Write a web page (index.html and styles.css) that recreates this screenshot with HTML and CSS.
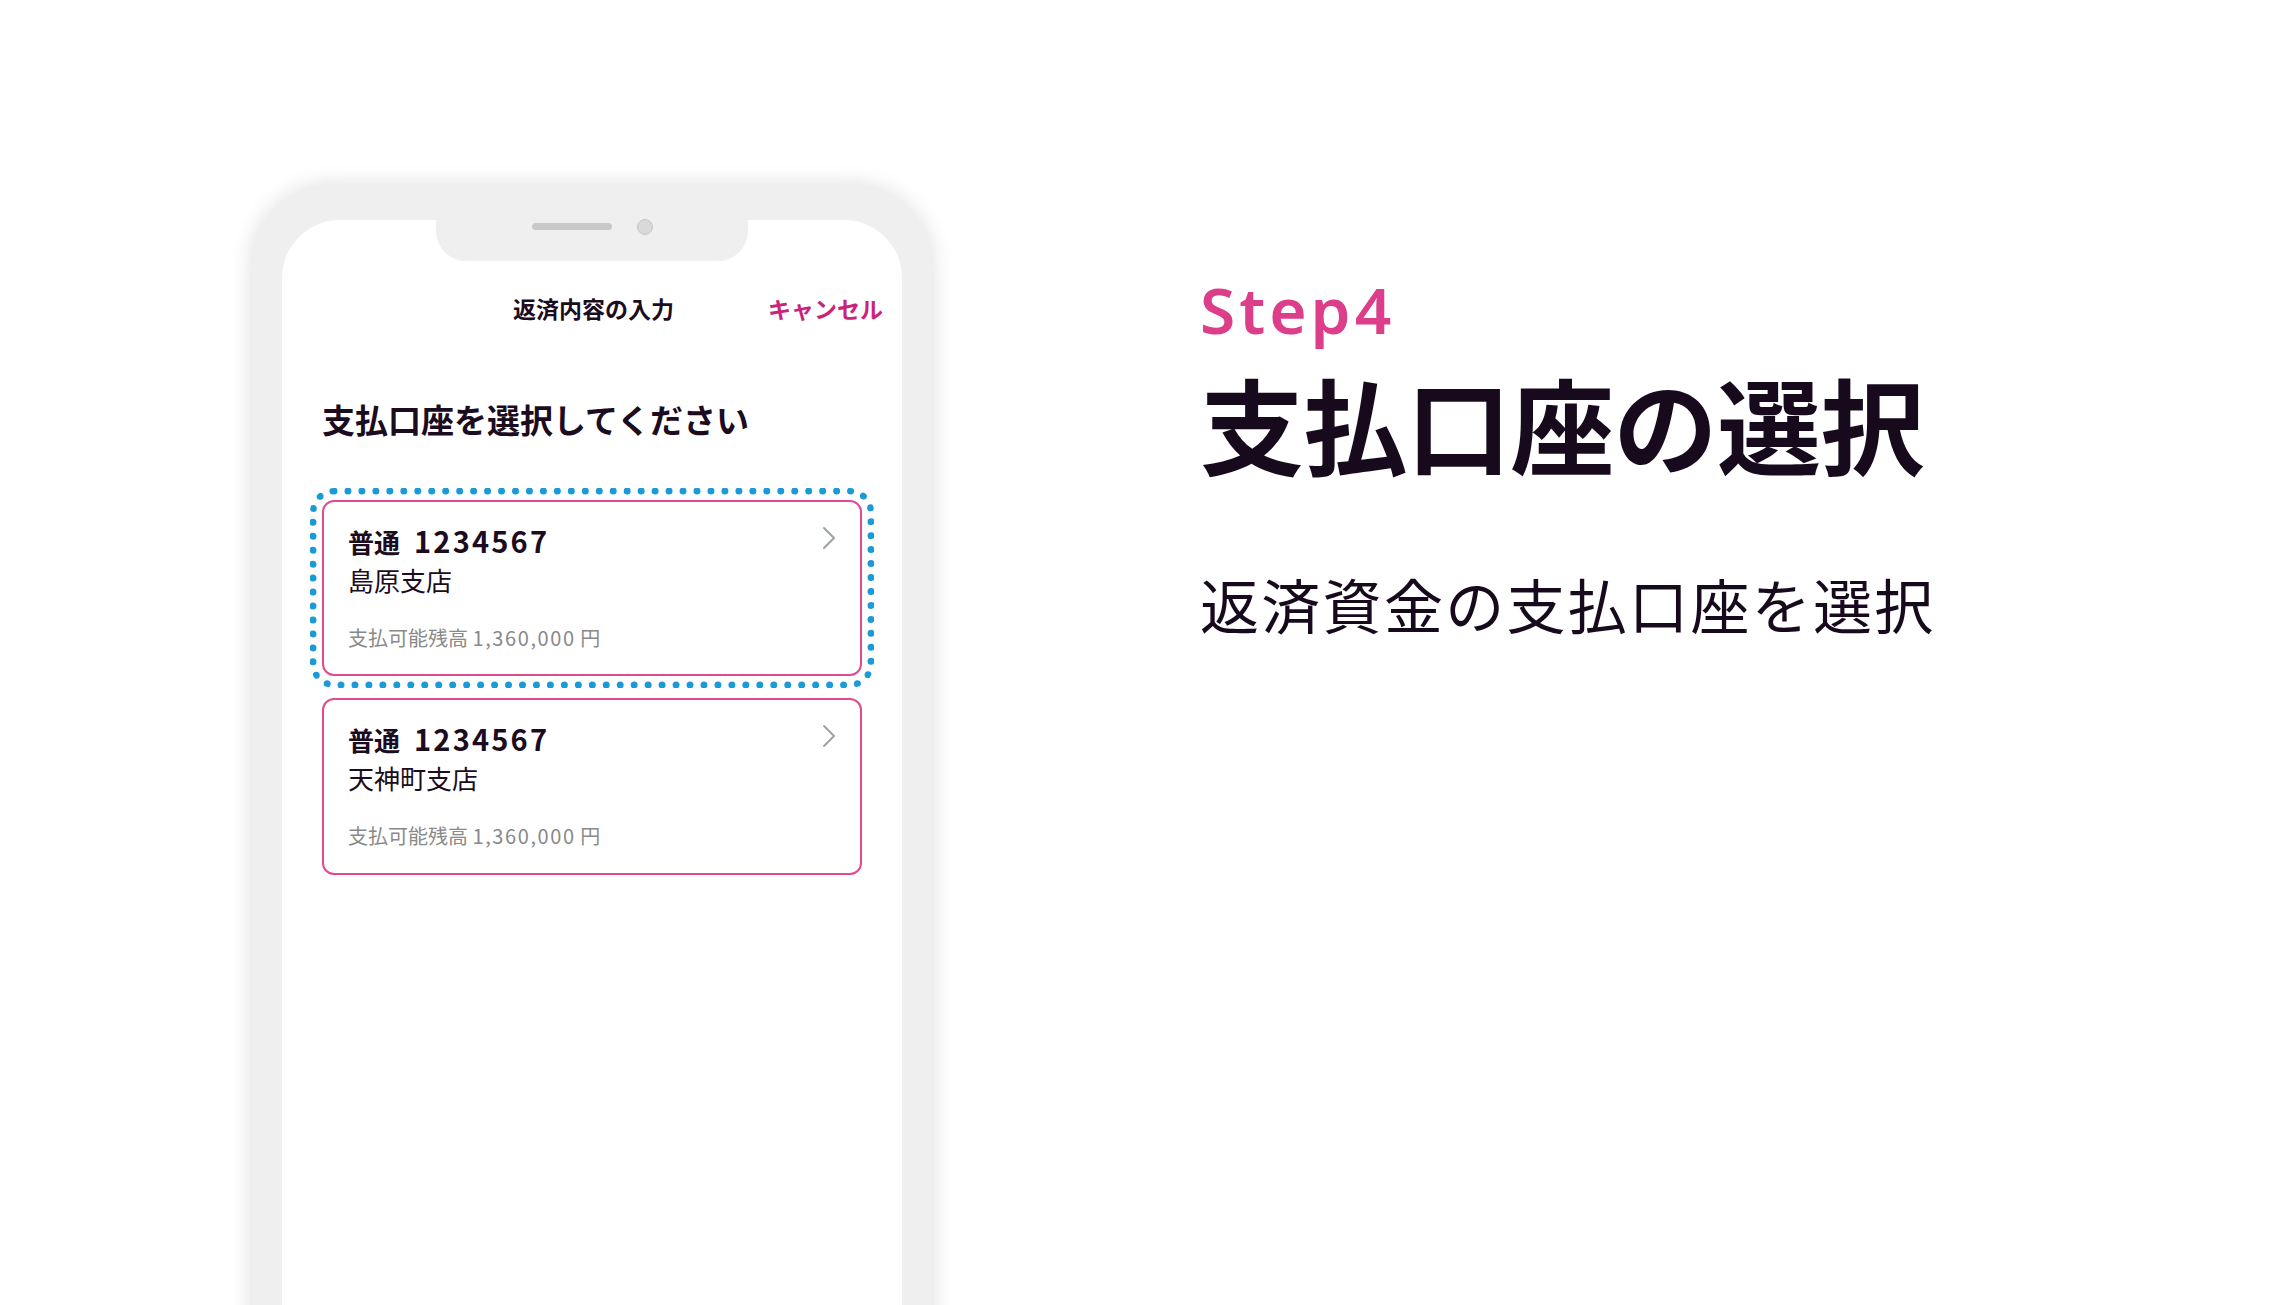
FILE: index.html
```html
<!DOCTYPE html>
<html lang="ja">
<head>
<meta charset="utf-8">
<title>Step4 支払口座の選択</title>
<link rel="stylesheet" href="styles.css">
</head>
<body>
<div class="stage">
  <div class="phone">
    <div class="screen">
      <div class="notch"><span class="speaker"></span><span class="camera"></span></div>
      <header class="nav">
        <span></span>
        <span class="nav-title">返済内容の入力</span>
        <span class="nav-cancel">キャンセル</span>
      </header>
      <section class="content">
        <h2 class="title">支払口座を選択してください</h2>
        <div class="accounts">
          <div class="focus">
            <div class="card">
              <div class="card-body">
                <div class="acct"><span class="kind">普通</span><span class="num">1234567</span></div>
                <div class="branch">島原支店</div>
                <div class="balance">支払可能残高 <span class="amt">1,360,000</span> 円</div>
              </div>
              <svg class="chev" width="14" height="24" viewBox="0 0 14 24"><path d="M2 2 L12 12 L2 22" fill="none" stroke="#9ca2a8" stroke-width="2" stroke-linecap="round" stroke-linejoin="round"/></svg>
            </div>
          </div>
          <div class="card">
            <div class="card-body">
              <div class="acct"><span class="kind">普通</span><span class="num">1234567</span></div>
              <div class="branch">天神町支店</div>
              <div class="balance">支払可能残高 <span class="amt">1,360,000</span> 円</div>
            </div>
            <svg class="chev" width="14" height="24" viewBox="0 0 14 24"><path d="M2 2 L12 12 L2 22" fill="none" stroke="#9ca2a8" stroke-width="2" stroke-linecap="round" stroke-linejoin="round"/></svg>
          </div>
        </div>
      </section>
    </div>
  </div>
  <div class="copy">
    <p class="step">Step4</p>
    <h1 class="heading">支払口座の選択</h1>
    <p class="lead">返済資金の支払口座を選択</p>
  </div>
</div>
</body>
</html>
```
FILE: styles.css
```css
* { box-sizing: border-box; }
html, body { margin: 0; padding: 0; background: #ffffff; }
body {
  font-family: "Noto Sans CJK JP", "Noto Sans", sans-serif;
  color: #1b0c20;
}
.stage {
  display: flex;
  align-items: flex-start;
  width: 2290px;
  height: 1305px;
  overflow: hidden;
}
.phone {
  margin-left: 252px;
  margin-top: 185px;
  width: 680px;
  height: 1300px;
  padding: 35px 30px 0;
  background: #efefef;
  border-radius: 80px 80px 0 0;
  box-shadow: 0 0 22px rgba(0, 0, 0, 0.14);
  flex: none;
}
.screen {
  position: relative;
  height: 100%;
  background: #ffffff;
  border-radius: 58px 58px 0 0;
  padding-top: 77px;
}
.notch {
  position: absolute;
  top: 0;
  left: 50%;
  transform: translateX(-50%);
  width: 312px;
  height: 41px;
  background: #efefef;
  border-radius: 0 0 30px 30px;
  display: flex;
  justify-content: center;
  align-items: center;
  gap: 25px;
  padding-bottom: 20px;
}
.speaker {
  width: 80px;
  height: 7px;
  border-radius: 4px;
  background: #c9c9c9;
  margin-top: -8px;
}
.camera {
  width: 16px;
  height: 16px;
  border-radius: 50%;
  background: #d9d9d9;
  border: 1.5px solid #c6c6c6;
  margin-top: -8px;
}
.nav {
  display: grid;
  grid-template-columns: 1fr auto 1fr;
  align-items: center;
  padding: 0 19px 0 22px;
  font-size: 23px;
  line-height: 1;
  font-weight: 700;
}
.nav-title { color: #1b0c20; }
.nav-cancel { justify-self: end; color: #c9247d; }
.content { padding: 0 40px; }
.title {
  margin: 83px 0 0;
  font-size: 33px;
  line-height: 1;
  font-weight: 700;
  color: #1b0c20;
}
.accounts {
  margin-top: 64px;
  display: flex;
  flex-direction: column;
  gap: 22px;
}
.focus {
  border-radius: 12px;
  outline: 7px dotted #1a9bd7;
  outline-offset: 5px;
}
.card {
  display: flex;
  align-items: flex-start;
  justify-content: space-between;
  height: 176px;
  border: 2px solid #df4b8f;
  border-radius: 12px;
  padding: 25px 24px 0 24px;
  background: #ffffff;
}
.accounts > .card { height: 177px; }
.card-body { display: flex; flex-direction: column; }
.acct {
  display: flex;
  align-items: baseline;
  gap: 14px;
  font-weight: 700;
  font-size: 26px;
  line-height: 26px;
  height: 26px;
}
.num {
  font-size: 29px;
  letter-spacing: 2.2px;
}
.branch {
  margin-top: 14px;
  font-size: 26px;
  line-height: 1;
  font-weight: 400;
}
.balance {
  margin-top: 35px;
  font-size: 20px;
  line-height: 1;
  color: #898989;
}
.amt { letter-spacing: 1.6px; }
.chev { flex: none; margin-top: -1px; }
.copy {
  margin-left: 268px;
  margin-top: 278px;
  display: flex;
  flex-direction: column;
}
.step {
  margin: 0;
  font-family: "Noto Sans", sans-serif;
  font-weight: 600;
  font-size: 64px;
  line-height: 1;
  letter-spacing: 4px;
  color: #dc3e8a;
}
.heading {
  margin: 29px 0 0;
  font-size: 104px;
  line-height: 1;
  font-weight: 700;
  letter-spacing: -0.6px;
  color: #170a1d;
}
.lead {
  margin: 99px 0 0;
  font-size: 59px;
  line-height: 1;
  font-weight: 400;
  letter-spacing: 2.3px;
  color: #170a1d;
}
```
